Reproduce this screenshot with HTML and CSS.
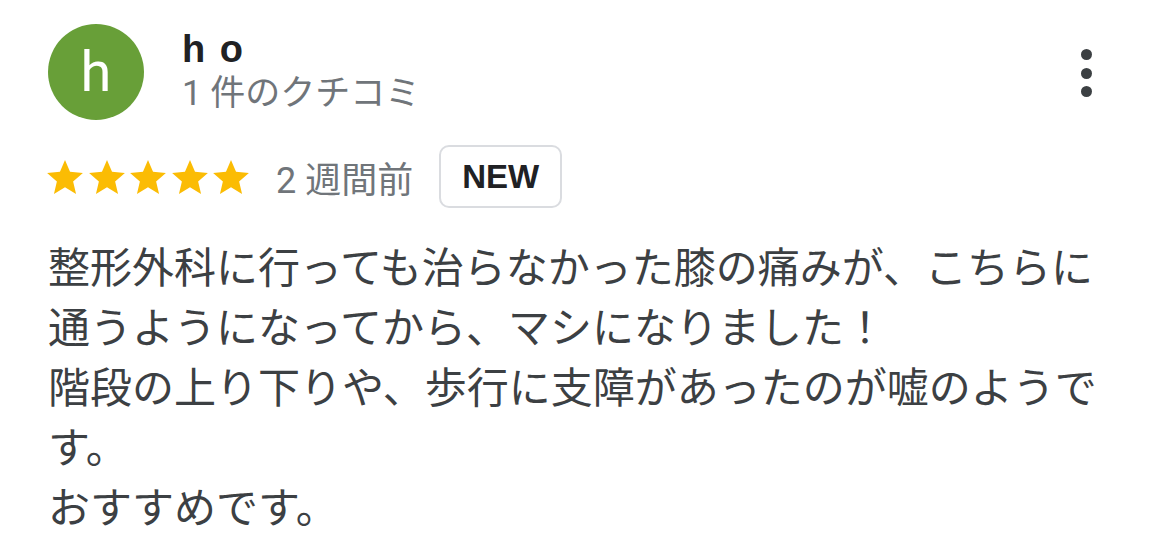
FILE: index.html
```html
<!DOCTYPE html>
<html lang="ja">
<head>
    <meta charset="UTF-8">
    <meta name="viewport" content="width=device-width, initial-scale=1.0">
    <title>クチコミ</title>
    <link rel="stylesheet" href="styles.css">
</head>
<body>
    <div class="review">
        <div class="review-head">
            <div class="avatar">h</div>
            <div class="author">
                <div class="author-name">h o</div>
                <div class="author-meta">1 件のクチコミ</div>
            </div>
            <div class="menu">
                <span></span>
                <span></span>
                <span></span>
            </div>
        </div>

        <div class="rating-row">
            <div class="stars">
                <svg viewBox="2 2 20 19"><path d="M12 17.27L18.18 21l-1.64-7.03L22 9.24l-7.19-.61L12 2 9.19 8.63 2 9.24l5.46 4.73L5.82 21z"/></svg>
                <svg viewBox="2 2 20 19"><path d="M12 17.27L18.18 21l-1.64-7.03L22 9.24l-7.19-.61L12 2 9.19 8.63 2 9.24l5.46 4.73L5.82 21z"/></svg>
                <svg viewBox="2 2 20 19"><path d="M12 17.27L18.18 21l-1.64-7.03L22 9.24l-7.19-.61L12 2 9.19 8.63 2 9.24l5.46 4.73L5.82 21z"/></svg>
                <svg viewBox="2 2 20 19"><path d="M12 17.27L18.18 21l-1.64-7.03L22 9.24l-7.19-.61L12 2 9.19 8.63 2 9.24l5.46 4.73L5.82 21z"/></svg>
                <svg viewBox="2 2 20 19"><path d="M12 17.27L18.18 21l-1.64-7.03L22 9.24l-7.19-.61L12 2 9.19 8.63 2 9.24l5.46 4.73L5.82 21z"/></svg>
            </div>
            <span class="time">2 週間前</span>
            <span class="badge">NEW</span>
        </div>

        <p class="review-text">整形外科に行っても治らなかった膝の痛みが、こちらに通うようになってから、マシになりました！<br>階段の上り下りや、歩行に支障があったのが嘘のようです。<br>おすすめです。</p>
    </div>
</body>
</html>
```

FILE: styles.css
```css
body {
    margin: 0;
    background: #fff;
    font-family: Roboto, "Liberation Sans", "Noto Sans CJK JP", sans-serif;
}
.review {
    padding: 24px 48px 0 48px;
}
.review-head {
    display: flex;
    align-items: flex-start;
}
.avatar {
    width: 96px;
    height: 96px;
    border-radius: 50%;
    background: #689f38;
    color: #fff;
    font-size: 56px;
    line-height: 96px;
    text-align: center;
    flex-shrink: 0;
}
.author {
    flex: 1;
    margin-left: 38px;
    padding-top: 3px;
}
.author-name {
    font-family: "Liberation Sans", Arial, sans-serif;
    font-weight: bold;
    font-size: 38px;
    line-height: 44px;
    letter-spacing: 2px;
    color: #202124;
}
.author-meta {
    font-size: 35px;
    line-height: 46px;
    color: #70757a;
}
.menu {
    display: flex;
    flex-direction: column;
    gap: 7.5px;
    margin-top: 25px;
    margin-right: 30px;
}
.menu span {
    width: 11px;
    height: 11px;
    border-radius: 50%;
    background: #3c4043;
}
.rating-row {
    display: flex;
    align-items: center;
    margin-top: 25px;
}
.stars {
    display: flex;
    gap: 5.5px;
    margin-left: -1px;
}
.stars svg {
    width: 36px;
    height: 34px;
    fill: #fbbc04;
}
.time {
    margin-left: 27px;
    font-size: 36px;
    color: #70757a;
}
.badge {
    margin-left: 26px;
    width: 123px;
    height: 63px;
    box-sizing: border-box;
    border: 2px solid #dadce0;
    border-radius: 10px;
    display: flex;
    align-items: center;
    justify-content: center;
    font-family: "Liberation Sans", Arial, sans-serif;
    font-weight: bold;
    font-size: 33px;
    color: #202124;
}
.review-text {
    margin: 27px 0 0 0;
    font-family: "Noto Sans CJK JP", sans-serif;
    font-size: 42px;
    line-height: 60px;
    color: #3c4043;
}
```
